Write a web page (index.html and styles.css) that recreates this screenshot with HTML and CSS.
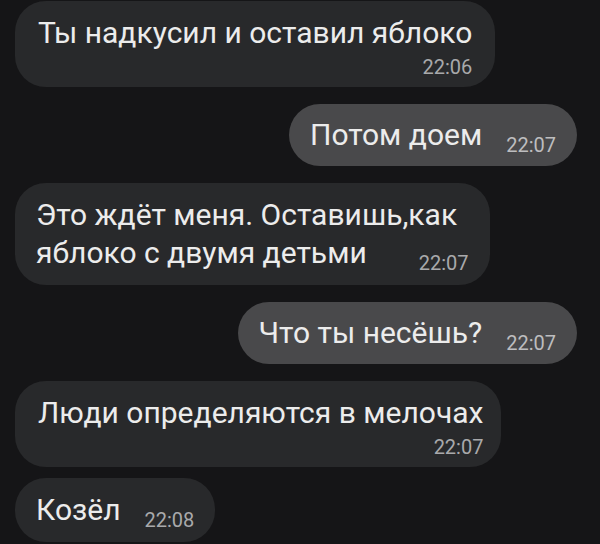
FILE: index.html
```html
<!DOCTYPE html>
<html>
<head>
  <title>Chat</title>
  <meta name="viewport" content="width=device-width, initial-scale=1.0">
  <link rel="stylesheet" href="styles.css">
</head>
<body>
  <div class="chat">
    <div class="bubble in stacked">
      <div class="text">Ты надкусил и оставил яблоко</div>
      <div class="time">22:06</div>
    </div>

    <div class="bubble out">
      <span class="text">Потом доем</span><span class="time">22:07</span>
    </div>

    <div class="bubble in">
      <span class="text">Это ждёт меня. Оставишь,как<br>яблоко с двумя детьми</span><span class="time wide">22:07</span>
    </div>

    <div class="bubble out">
      <span class="text">Что ты несёшь?</span><span class="time">22:07</span>
    </div>

    <div class="bubble in stacked narrow">
      <div class="text">Люди определяются в мелочах</div>
      <div class="time">22:07</div>
    </div>

    <div class="bubble in grouped">
      <span class="text">Козёл</span><span class="time">22:08</span>
    </div>
  </div>
</body>
</html>
```

FILE: styles.css
```css
body {
  margin: 0;
  padding: 0;
  background-color: #151517;
  font-family: Roboto, "Noto Sans", sans-serif;
  overflow: hidden;
}

.chat {
  display: flex;
  flex-direction: column;
  padding: 1px 23px 0 15px;
}

.bubble {
  max-width: 480px;
  margin-top: 17px;
  padding: 12px 21px 12px 21px;
  border-radius: 31px;
  color: #ececec;
  font-size: 30px;
  line-height: 38px;
}

.bubble:first-child {
  margin-top: 0;
}

.bubble.grouped {
  margin-top: 11px;
}

.in {
  align-self: flex-start;
  padding-top: 13px;
  padding-bottom: 13px;
  background-color: #28292b;
}

.out {
  align-self: flex-end;
  background-color: #49494b;
}

.time {
  display: inline-block;
  margin-left: 24px;
  font-size: 20px;
  line-height: 14px;
  color: #a9a9ab;
  vertical-align: -7px;
}

.out .time {
  color: #bdbdbf;
}

.time.wide {
  margin-left: 52px;
}

.stacked {
  padding: 13px 23px 9px 23px;
}

.stacked.narrow {
  padding-right: 18px;
}

.stacked .time {
  display: block;
  margin: 4px 0 0 0;
  line-height: 22px;
  text-align: right;
  vertical-align: baseline;
}
```
